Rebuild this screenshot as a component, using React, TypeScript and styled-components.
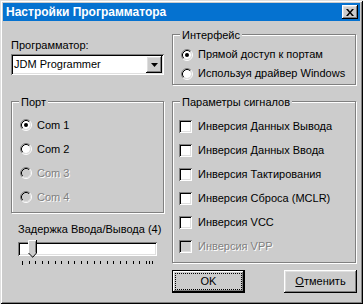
import React from "react";
import styled, { createGlobalStyle, css } from "styled-components";

const GlobalStyle = createGlobalStyle`
  html, body {
    margin: 0;
    padding: 0;
    background: #cccccc;
  }
  * {
    box-sizing: border-box;
  }
`;

const FACE = "#cccccc";

const raised = css`
  box-shadow: inset -1px -1px 0 #000, inset 1px 1px 0 #fff,
    inset -2px -2px 0 #808080, inset 2px 2px 0 #dfdfdf;
`;

const sunken = css`
  box-shadow: inset 1px 1px 0 #808080, inset -1px -1px 0 #fff,
    inset 2px 2px 0 #000, inset -2px -2px 0 #dfdfdf;
`;

const Window = styled.div`
  width: 363px;
  height: 304px;
  padding: 3px;
  display: flex;
  flex-direction: column;
  background: ${FACE};
  font-family: "Liberation Sans", Arial, sans-serif;
  font-size: 11px;
  line-height: 13px;
  color: #000;
  box-shadow: inset 1px 1px 0 #dfdfdf, inset -1px -1px 0 #000,
    inset 2px 2px 0 #fff, inset -2px -2px 0 #808080;
`;

const TitleBar = styled.div`
  height: 18px;
  display: flex;
  align-items: center;
  justify-content: space-between;
  padding: 0 2px 0 3px;
  background: #0572d0;
`;

const TitleText = styled.span`
  color: #fff;
  font-weight: bold;
  font-size: 12px;
  line-height: 14px;
`;

const CloseButton = styled.div`
  width: 16px;
  height: 14px;
  display: flex;
  align-items: center;
  justify-content: center;
  background: ${FACE};
  ${raised};
`;

const Body = styled.div`
  flex: 1;
  display: flex;
  gap: 8px;
  padding: 0 3px 0 8px;
`;

const Column = styled.div<{ $width?: number }>`
  display: flex;
  flex-direction: column;
  width: ${(p) => (p.$width ? `${p.$width}px` : "auto")};
  flex: ${(p) => (p.$width ? "none" : "1")};
`;

const FieldLabel = styled.div`
  margin-top: 18px;
`;

const ComboBox = styled.div`
  margin-top: 2px;
  height: 21px;
  display: flex;
  align-items: stretch;
  padding: 2px;
  background: #fff;
  ${sunken};
`;

const ComboValue = styled.div`
  flex: 1;
  display: flex;
  align-items: center;
  padding-left: 1px;
`;

const ComboArrow = styled.div`
  width: 16px;
  display: flex;
  align-items: center;
  justify-content: center;
  background: ${FACE};
  ${raised};
`;

const GroupBox = styled.div<{ $top: number; $height: number; $width: number; $padTop: number; $padLeft: number }>`
  position: relative;
  margin-top: ${(p) => p.$top}px;
  width: ${(p) => p.$width}px;
  height: ${(p) => p.$height}px;
  padding: ${(p) => p.$padTop}px 0 0 ${(p) => p.$padLeft}px;
  border: 1px solid #808080;
  box-shadow: inset 1px 1px 0 #fff, 1px 1px 0 #fff;
`;

const GroupLegend = styled.span`
  position: absolute;
  top: -6px;
  left: 7px;
  padding: 0 2px;
  background: ${FACE};
`;

const OptionRow = styled.div<{ $height: number }>`
  height: ${(p) => p.$height}px;
  display: flex;
  align-items: center;
  gap: 5px;
`;

const OptionText = styled.span<{ $disabled?: boolean }>`
  color: ${(p) => (p.$disabled ? "#808080" : "#000")};
  text-shadow: ${(p) => (p.$disabled ? "1px 1px 0 #fff" : "none")};
`;

const RadioSvg = styled.svg`
  flex: none;
  display: block;
`;

const CheckBox = styled.span<{ $disabled?: boolean }>`
  flex: none;
  width: 13px;
  height: 13px;
  margin-right: 1px;
  background: ${(p) => (p.$disabled ? FACE : "#fff")};
  ${sunken};
`;

const SliderLabel = styled.div`
  margin-top: 10px;
  padding-left: 7px;
`;

const SliderTrack = styled.div`
  position: relative;
  margin: 6px 0 0 7px;
  width: 139px;
  height: 14px;
  background: #fff;
  ${sunken};
`;

const SliderThumb = styled.svg`
  position: absolute;
  left: 10px;
  top: -2px;
`;

const TickRow = styled.div`
  margin: 5px 0 0 11px;
  width: 131px;
  display: flex;
  justify-content: space-between;
  align-items: flex-start;
`;

const Tick = styled.span<{ $major?: boolean; $double?: boolean }>`
  width: 1px;
  height: ${(p) => (p.$major ? 4 : 3)}px;
  background: #000;
  box-shadow: ${(p) => (p.$double ? "-3px 0 0 #000" : "none")};
`;

const ButtonRow = styled.div`
  margin-top: 7px;
  display: flex;
  justify-content: space-between;
`;

const DialogButton = styled.div<{ $isDefault?: boolean }>`
  width: 73px;
  height: 23px;
  display: flex;
  padding: 3px;
  background: ${FACE};
  ${(p) =>
    p.$isDefault
      ? css`
          box-shadow: inset 0 0 0 1px #000, inset -2px -2px 0 #000,
            inset 2px 2px 0 #fff, inset -3px -3px 0 #808080;
        `
      : raised};
`;

const FocusFrame = styled.span<{ $focused?: boolean }>`
  flex: 1;
  display: flex;
  align-items: center;
  justify-content: center;
  border: 1px ${(p) => (p.$focused ? "dotted #000" : "solid transparent")};
`;

const Radio = ({ checked, disabled }: { checked?: boolean; disabled?: boolean }) => (
  <RadioSvg width="12" height="12" viewBox="0 0 12 12">
    <circle cx="6" cy="6" r="4" fill={disabled ? FACE : "#fff"} />
    <path d="M9.89 2.11 A5.5 5.5 0 0 0 2.11 9.89" stroke="#808080" fill="none" />
    <path d="M9.89 2.11 A5.5 5.5 0 0 1 2.11 9.89" stroke="#fff" fill="none" />
    <path d="M9.18 2.82 A4.5 4.5 0 0 0 2.82 9.18" stroke="#000" fill="none" />
    <path d="M9.18 2.82 A4.5 4.5 0 0 1 2.82 9.18" stroke="#dfdfdf" fill="none" />
    {checked && <circle cx="6" cy="6" r="2" fill={disabled ? "#808080" : "#000"} />}
  </RadioSvg>
);

const ports = [
  { label: "Com 1", checked: true },
  { label: "Com 2" },
  { label: "Com 3", disabled: true },
  { label: "Com 4", disabled: true },
];

const signals = [
  { label: "Инверсия Данных Вывода" },
  { label: "Инверсия Данных Ввода" },
  { label: "Инверсия Тактирования" },
  { label: "Инверсия Сброса (MCLR)" },
  { label: "Инверсия VCC" },
  { label: "Инверсия VPP", disabled: true },
];

const ticks = Array.from({ length: 21 }, (_, i) => i);

export default function App() {
  return (
    <>
      <GlobalStyle />
      <Window>
        <TitleBar>
          <TitleText>Настройки Программатора</TitleText>
          <CloseButton>
            <svg width="8" height="7" viewBox="0 0 8 7">
              <path d="M0 0h2l2 2.5L6 0h2L5 3.5 8 7H6L4 4.5 2 7H0l3-3.5z" fill="#000" />
            </svg>
          </CloseButton>
        </TitleBar>
        <Body>
          <Column $width={153}>
            <FieldLabel>Программатор:</FieldLabel>
            <ComboBox>
              <ComboValue>JDM Programmer</ComboValue>
              <ComboArrow>
                <svg width="7" height="4" viewBox="0 0 7 4">
                  <path d="M0 0h7L3.5 4z" fill="#000" />
                </svg>
              </ComboArrow>
            </ComboBox>
            <GroupBox $top={26} $height={112} $width={153} $padTop={11} $padLeft={8}>
              <GroupLegend>Порт</GroupLegend>
              {ports.map((port) => (
                <OptionRow key={port.label} $height={24}>
                  <Radio checked={port.checked} disabled={port.disabled} />
                  <OptionText $disabled={port.disabled}>{port.label}</OptionText>
                </OptionRow>
              ))}
            </GroupBox>
            <SliderLabel>Задержка Ввода/Вывода (4)</SliderLabel>
            <SliderTrack>
              <SliderThumb width="9" height="18" viewBox="0 0 9 18">
                <path d="M0.5 0.5h8v12.5l-4 4-4-4z" fill={FACE} />
                <path d="M0.5 13V0.5h7.5" stroke="#fff" fill="none" />
                <path d="M8.5 0v13l-4 4.5" stroke="#000" fill="none" />
                <path d="M0.5 13l4 4" stroke="#000" fill="none" />
                <path d="M7.5 1.5v11" stroke="#808080" fill="none" />
              </SliderThumb>
            </SliderTrack>
            <TickRow>
              {ticks.map((t) => (
                <Tick key={t} $major={t === 0} $double={t === ticks.length - 1} />
              ))}
            </TickRow>
          </Column>
          <Column>
            <GroupBox $top={13} $height={51} $width={184} $padTop={10} $padLeft={8}>
              <GroupLegend>Интерфейс</GroupLegend>
              <OptionRow $height={19}>
                <Radio checked />
                <OptionText>Прямой доступ к портам</OptionText>
              </OptionRow>
              <OptionRow $height={19}>
                <Radio />
                <OptionText>Используя драйвер Windows</OptionText>
              </OptionRow>
            </GroupBox>
            <GroupBox $top={16} $height={162} $width={184} $padTop={12} $padLeft={6}>
              <GroupLegend>Параметры сигналов</GroupLegend>
              {signals.map((s) => (
                <OptionRow key={s.label} $height={24}>
                  <CheckBox $disabled={s.disabled} />
                  <OptionText $disabled={s.disabled}>{s.label}</OptionText>
                </OptionRow>
              ))}
            </GroupBox>
            <ButtonRow>
              <DialogButton $isDefault>
                <FocusFrame $focused>OK</FocusFrame>
              </DialogButton>
              <DialogButton>
                <FocusFrame>
                  <span>
                    <u>О</u>тменить
                  </span>
                </FocusFrame>
              </DialogButton>
            </ButtonRow>
          </Column>
        </Body>
      </Window>
    </>
  );
}
